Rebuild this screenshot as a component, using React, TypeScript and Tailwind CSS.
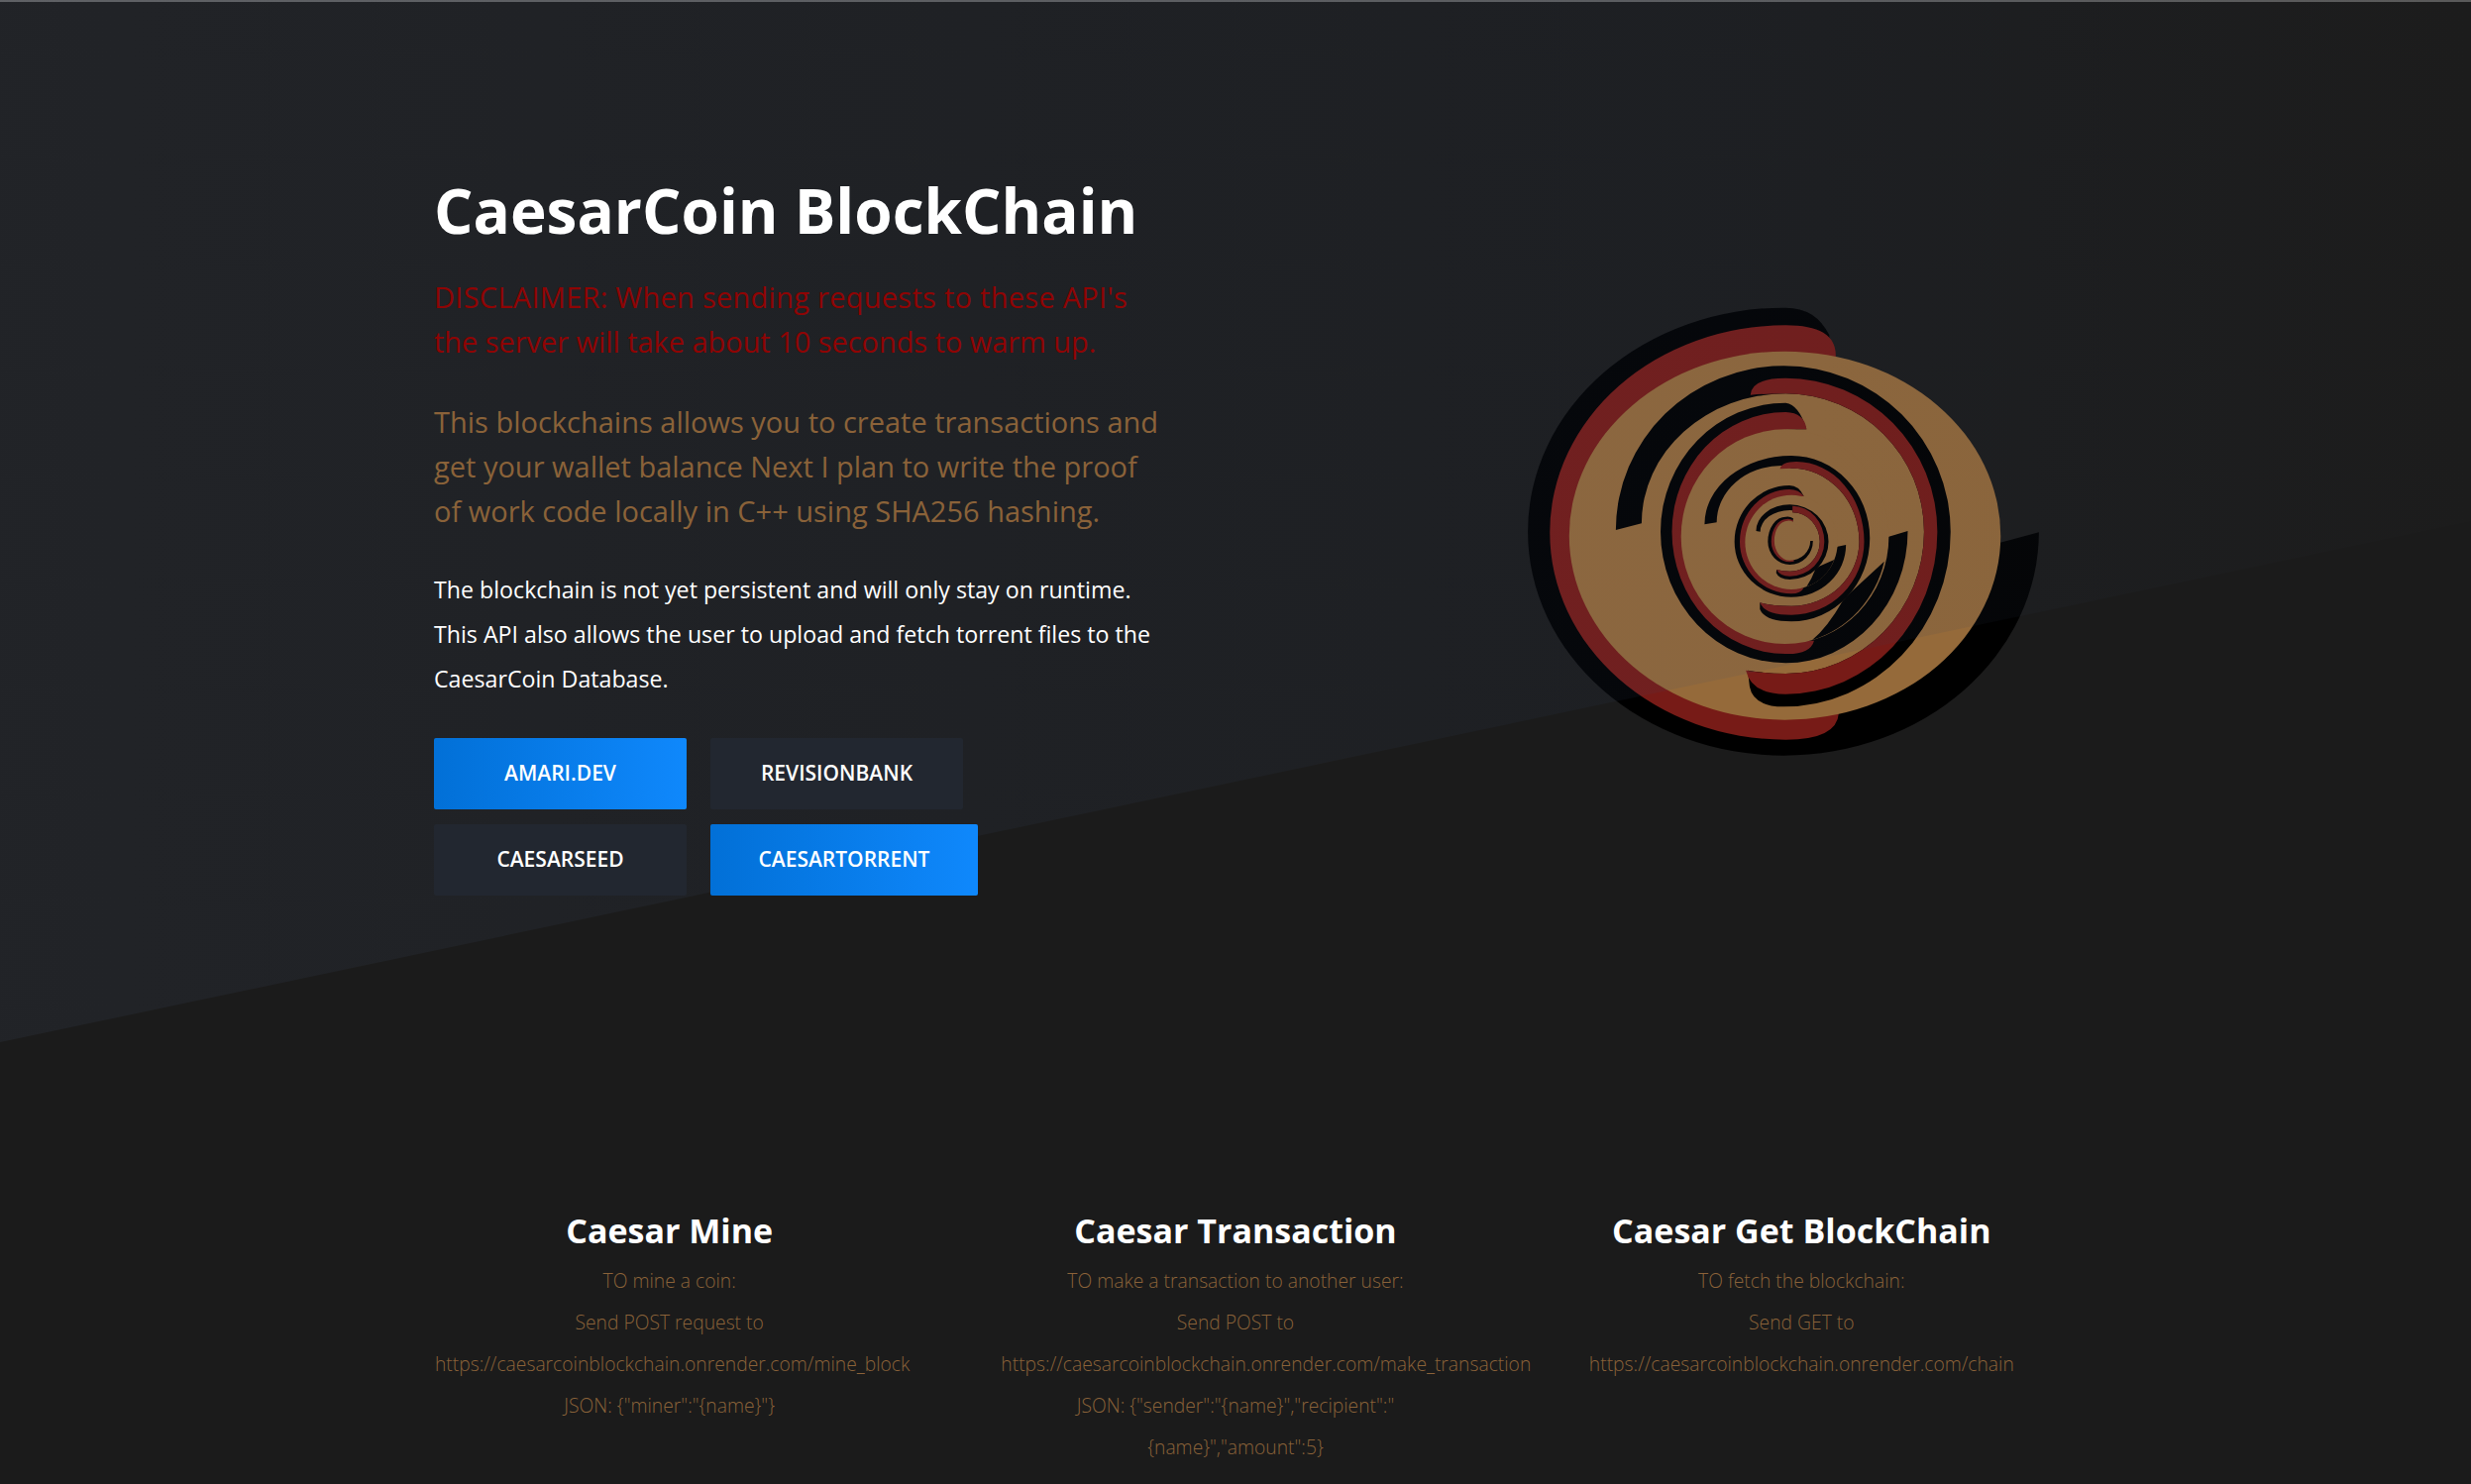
const BLACK = '#000000';
const RED = '#771b17';
const TAN = '#956a3a';

// coordinates come from a 1568x1560 crop of the logo, stretched back to 600x520
function Logo() {
  return (
    <svg viewBox="0 0 1568 1560" preserveAspectRatio="none" className="w-[600px] h-[520px] shrink-0">
      {/* outer shell */}
      <path fill={BLACK} d="M1458 772 A673 678 0 0 1 785 1448 A675 678 0 0 1 110 770 A675 678 0 0 1 790 92 Q870 92 905 175 L905 300 L1300 820 Z" />
      <path fill={RED} d="M922 240 Q925 145 790 145 A622 627 0 0 0 168 772 A622 627 0 0 0 790 1400 Q925 1400 930 1320 Z" />
      <ellipse fill={TAN} cx="788" cy="782" rx="569" ry="558" />

      {/* first pair of arms */}
      <path fill={BLACK} d="M342 765 A443 497 0 0 1 785 268 A440 502 0 0 1 1225 770 A440 530 0 0 1 785 1300 Q705 1300 695 1240 L690 1190 Q740 1200 790 1200 A365 430 0 0 0 1155 770 A365 418 0 0 0 790 352 A380 393 0 0 0 410 745 Z" />
      <path fill={RED} d="M697 356 Q700 305 790 305 A400 465 0 0 1 1190 770 A400 492 0 0 1 790 1262 Q700 1262 685 1190 Q740 1200 790 1200 A365 430 0 0 0 1155 770 A365 418 0 0 0 790 352 Q740 352 697 356 Z" />
      <path fill={BLACK} d="M1112 768 A322 400 0 0 1 790 1168 A330 398 0 0 1 460 770 A330 390 0 0 1 790 380 Q825 385 845 460 L790 460 L790 1110 L1062 785 Z" />
      <path fill={RED} d="M845 460 Q840 410 790 408 A300 362 0 0 0 490 770 A300 370 0 0 0 790 1140 Q855 1142 865 1100 L790 1100 L790 460 Z" />
      <ellipse fill={TAN} cx="788" cy="785" rx="274" ry="325" />
      <path fill={BLACK} d="M1050 860 L965 950 L940 980 Q900 1060 860 1098 A274 325 0 0 0 1050 860 Z" />

      {/* second pair */}
      <path fill={BLACK} d="M576 748 A229 208 0 0 1 805 540 A207 250 0 0 1 1012 790 A207 252 0 0 1 805 1042 Q735 1042 722 1005 L722 985 Q750 995 805 995 A179 195 0 0 0 984 800 A179 222 0 0 0 805 578 Q790 570 780 570 A172 172 0 0 0 608 742 Z" />
      <path fill={RED} d="M775 580 Q780 558 818 558 A179 242 0 0 1 997 800 A192 222 0 0 1 805 1022 Q735 1022 722 985 Q750 995 805 995 A179 195 0 0 0 984 800 A179 222 0 0 0 805 578 Q790 578 775 580 Z" />
      <path fill={BLACK} d="M949 810 A144 158 0 0 1 805 968 A150 168 0 0 1 655 800 A145 170 0 0 1 800 630 Q825 630 838 663 L805 660 L805 945 L927 815 Z" />
      <path fill={RED} d="M838 663 Q825 642 800 642 A131 158 0 0 0 669 800 A136 158 0 0 0 805 958 Q830 958 838 940 L805 940 L805 663 Z" />
      <ellipse fill={TAN} cx="805" cy="802" rx="122" ry="143" />
      <path fill={BLACK} d="M918 855 L878 875 L868 885 Q858 915 845 937 A122 143 0 0 0 918 855 Z" />

      {/* inner coils */}
      <path fill={BLACK} d="M712 768 A89 80 0 0 1 801 688 A102 112 0 0 1 903 800 A102 115 0 0 1 801 915 Q772 915 765 895 L766 885 Q780 890 801 890 A79 90 0 0 0 880 800 A72 88 0 0 0 808 712 L808 706 L801 705 A78 65 0 0 0 723 770 Z" />
      <path fill={RED} d="M808 692 A84 108 0 0 1 892 800 A91 105 0 0 1 801 905 Q775 905 766 885 Q780 890 801 890 A79 90 0 0 0 880 800 A72 88 0 0 0 808 712 Z" />
      <path fill={BLACK} d="M810 730 Q800 722 790 725 A47 75 0 0 0 743 800 A58 70 0 0 0 801 870 A61 72 0 0 0 862 798 L855 798 L801 800 Z" />
      <path fill={RED} d="M810 736 Q800 730 792 732 A40 68 0 0 0 752 800 A49 62 0 0 0 801 862 L812 860 L801 800 Z" />
      <path fill={TAN} d="M810 740 Q800 735 795 737 A35 60 0 0 0 760 797 A41 60 0 0 0 801 857 A54 59 0 0 0 855 798 L855 780 Z" />
    </svg>
  );
}

const COLUMNS = [
  {
    title: 'Caesar Mine',
    lines: [
      { text: 'TO mine a coin:' },
      { text: 'Send POST request to' },
      { text: 'https://caesarcoinblockchain.onrender.com/mine_block', className: 'pl-[6px]' },
      { text: 'JSON: {"miner":"{name}"}' },
    ],
  },
  {
    title: 'Caesar Transaction',
    lines: [
      { text: 'TO make a transaction to another user:' },
      { text: 'Send POST to' },
      // this url overflows its column in the original, so it sits off-centre
      { text: 'https://caesarcoinblockchain.onrender.com/make_transaction', className: 'pl-[37px]' },
      { text: 'JSON: {"sender":"{name}","recipient":"' },
      { text: '{name}","amount":5}' },
    ],
  },
  {
    title: 'Caesar Get BlockChain',
    lines: [
      { text: 'TO fetch the blockchain:' },
      { text: 'Send GET to' },
      { text: 'https://caesarcoinblockchain.onrender.com/chain' },
    ],
  },
];

const BLUE = 'bg-gradient-to-r from-[#0270d7] to-[#0f88fc] text-white';
const DARK = 'bg-[#222730] text-white';

export default function App() {
  return (
    <div className="relative h-[1498px] overflow-hidden bg-[#1b1b1b] font-['Open_Sans',sans-serif]">
      <div className="h-[2px] bg-[#5f5f5f]" />

      {/* diagonal tint, sits over the logo but under the copy */}
      <div className="absolute inset-0 z-[1] bg-gradient-to-r from-[#5a6e96] via-[#32466a] via-70% to-[#252525] opacity-10 [clip-path:polygon(0_0,100%_0,100%_526px,0_1052px)]" />

      <section className="flex items-start pl-[438px] pt-[172px]">
        <div className="relative z-[2] w-[736px] shrink-0">
          <h1 className="text-[62px] leading-[77px] font-bold text-white whitespace-nowrap">CaesarCoin BlockChain</h1>
          <p className="mt-[26px] text-[29px] leading-[45px] text-[#8f0404] whitespace-nowrap">
            <span className="tracking-[0.27px]">DISCLAIMER: When sending requests to these API's</span>
            <br />
            <span className="tracking-[-0.05px]">the server will take about 10 seconds to warm up.</span>
          </p>
          <p className="mt-[36px] text-[29px] leading-[45px] text-[#8a6239] whitespace-nowrap">
            This blockchains allows you to create transactions and
            <br />
            get your wallet balance Next I plan to write the proof
            <br />
            of work code locally in C++ using SHA256 hashing.
          </p>
          <p className="mt-[35px] text-[23.2px] leading-[45px] text-white whitespace-nowrap">
            The blockchain is not yet persistent and will only stay on runtime.
            <br />
            This API also allows the user to upload and fetch torrent files to the
            <br />
            CaesarCoin Database.
          </p>
          <div className="mt-[37px] flex w-[560px] flex-wrap gap-x-[24px] gap-y-[15px]">
            <a className={`flex h-[72px] w-[255px] items-center justify-center rounded-[2px] text-[21px] font-semibold ${BLUE}`}>AMARI.DEV</a>
            <a className={`flex h-[72px] w-[255px] items-center justify-center rounded-[2px] text-[21px] font-semibold ${DARK}`}>REVISIONBANK</a>
            <a className={`flex h-[72px] w-[255px] items-center justify-center rounded-[2px] text-[21px] font-semibold ${DARK}`}>CAESARSEED</a>
            <a className={`flex h-[72px] w-[270px] items-center justify-center rounded-[2px] text-[21px] font-semibold ${BLUE}`}>CAESARTORRENT</a>
          </div>
        </div>
        <div className="ml-[326px] mt-[106px]">
          <Logo />
        </div>
      </section>

      <section className="relative z-[2] mx-auto mt-[316px] grid w-[1690px] grid-cols-3 gap-x-[24px] text-center">
        {COLUMNS.map((col) => (
          <div key={col.title}>
            <h3 className="text-[34px] leading-[44px] font-bold text-white">{col.title}</h3>
            <div className="mt-[8px] text-[19.3px] leading-[42px] font-light text-[#8a6239]">
              {col.lines.map((line) => (
                <p key={line.text} className={`whitespace-nowrap ${line.className ?? ''}`}>{line.text}</p>
              ))}
            </div>
          </div>
        ))}
      </section>
    </div>
  );
}
